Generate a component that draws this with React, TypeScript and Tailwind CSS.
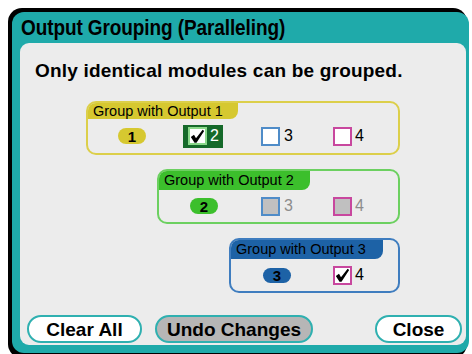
import React from "react";

const Check = () => (
  <svg viewBox="0 0 18 18" className="w-[15px] h-[15px]">
    <path d="M1 9.5 L4.8 7 L7.2 11 L15.2 1 L17 2.4 L7.8 16.4 L5.4 16.4 Z" fill="#000" />
  </svg>
);

function Box({
  border,
  fill = "bg-white",
  checked = false,
}: {
  border: string;
  fill?: string;
  checked?: boolean;
}) {
  return (
    <div className={`w-[19px] h-[19px] border-2 ${border} ${fill} flex items-center justify-center box-border`}>
      {checked && <Check />}
    </div>
  );
}

export default function App() {
  return (
    <div className="w-[472px] h-[354px] bg-white relative overflow-hidden" style={{ fontFamily: '"Liberation Sans", Arial, sans-serif' }}>
      <div className="absolute left-[8px] top-[8px] w-[459px] h-[350px] bg-black rounded-[14px] pl-[4px] pt-[4px]">
        <div className="w-[457px] h-[341px] bg-[#1faaaa] rounded-[12px] flex flex-col">
          <div className="h-[31px] pl-[9px] flex items-center">
            <span className="inline-block text-[19px] font-bold text-black leading-none scale-y-[1.18] origin-center tracking-[-0.1px]">
              Output Grouping (Paralleling)
            </span>
          </div>
          <div className="ml-[8px] w-[446px] h-[302px] bg-[#ececec] rounded-[9px] flex flex-col">
            <div className="mt-[17px] pl-[15px] h-[22px] leading-[22px] text-[19px] font-bold text-black tracking-[0.2px]">
              Only identical modules can be grouped.
            </div>

            <div className="mt-[19px] flex flex-col items-end pr-[66px] gap-[14px]">
              {/* Group 1 */}
              <div className="w-[314px] h-[54px] border-2 border-[#dccf4a] rounded-[10px] box-border flex flex-col overflow-hidden">
                <div className="w-[150px] h-[16px] bg-[#d6c830] rounded-br-[8px] pl-[5px] text-[14.5px] leading-[16px] text-black">
                  Group with Output 1
                </div>
                <div className="flex-1 flex items-center text-[16px]">
                  <div className="ml-[30px] w-[28px] h-[16px] rounded-full bg-[#d6c830] flex items-center justify-center text-[15px] font-bold leading-none">1</div>
                  <div className="ml-[37px] w-[40px] h-[23px] bg-[#15692a] flex items-center pl-[5px] gap-[3px]">
                    <div className="w-[19px] h-[18px] border-2 border-[#8ad88a] bg-white flex items-center justify-center box-border">
                      <Check />
                    </div>
                    <span className="text-white leading-none">2</span>
                  </div>
                  <div className="ml-[38px] w-[72px] flex items-center gap-[4px]">
                    <Box border="border-[#4f8cc8]" />
                    <span className="leading-none">3</span>
                  </div>
                  <div className="flex items-center gap-[3px]">
                    <Box border="border-[#c8479e]" />
                    <span className="leading-none">4</span>
                  </div>
                </div>
              </div>

              {/* Group 2 */}
              <div className="w-[243px] h-[55px] border-2 border-[#6cd060] rounded-[10px] box-border flex flex-col overflow-hidden">
                <div className="w-[151px] h-[19px] bg-[#3cbf2c] rounded-br-[8px] pl-[5px] text-[14.5px] leading-[19px] text-black">
                  Group with Output 2
                </div>
                <div className="flex-1 flex items-center text-[16px]">
                  <div className="ml-[31px] w-[28px] h-[16px] rounded-full bg-[#3cbf2c] flex items-center justify-center text-[15px] font-bold leading-none">2</div>
                  <div className="ml-[43px] w-[72px] flex items-center gap-[4px]">
                    <Box border="border-[#4f8cc8]" fill="bg-[#c0c0c0]" />
                    <span className="leading-none text-[#8c8c8c]">3</span>
                  </div>
                  <div className="flex items-center gap-[3px]">
                    <Box border="border-[#c8479e]" fill="bg-[#c0c0c0]" />
                    <span className="leading-none text-[#8c8c8c]">4</span>
                  </div>
                </div>
              </div>

              {/* Group 3 */}
              <div className="w-[171px] h-[55px] border-2 border-[#3f7dbf] rounded-[10px] box-border flex flex-col overflow-hidden">
                <div className="w-[152px] h-[19px] bg-[#1d62a6] rounded-br-[8px] pl-[5px] text-[14.5px] leading-[19px] text-black">
                  Group with Output 3
                </div>
                <div className="flex-1 flex items-center text-[16px]">
                  <div className="ml-[32px] w-[28px] h-[15px] rounded-full bg-[#1d62a6] flex items-center justify-center text-[15px] font-bold leading-none">3</div>
                  <div className="ml-[42px] flex items-center gap-[3px]">
                    <Box border="border-[#c8479e]" checked />
                    <span className="leading-none">4</span>
                  </div>
                </div>
              </div>
            </div>

            <div className="mt-auto mb-[2px] flex items-center pl-[7px] pr-[4px]">
              <button className="w-[115px] h-[28px] rounded-[14px] border-2 border-[#2fb0b0] bg-white text-[19px] font-bold text-black leading-none flex items-center justify-center">
                Clear All
              </button>
              <button className="ml-[13px] w-[158px] h-[28px] rounded-[14px] border-2 border-[#2fb0b0] bg-[#b6b6b6] text-[19px] font-bold text-black leading-none flex items-center justify-center">
                Undo Changes
              </button>
              <button className="ml-auto w-[87px] h-[28px] rounded-[14px] border-2 border-[#2fb0b0] bg-white text-[19px] font-bold text-black leading-none flex items-center justify-center">
                Close
              </button>
            </div>
          </div>
        </div>
      </div>
    </div>
  );
}
